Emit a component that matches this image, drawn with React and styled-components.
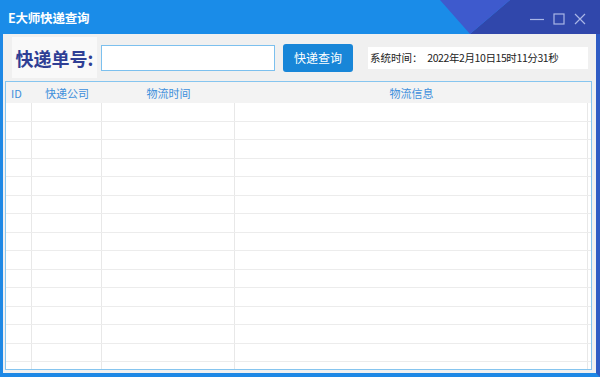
import React from "react";
import styled, { createGlobalStyle } from "styled-components";

const GlobalStyle = createGlobalStyle`
  body {
    margin: 0;
    font-family: "Noto Sans CJK SC", "Noto Sans", sans-serif;
  }
`;

const StyledWindow = styled.div`
  width: 600px;
  height: 377px;
  display: flex;
  flex-direction: column;
  overflow: hidden;
  background: #1e88e5;
`;

const StyledTitleBar = styled.div`
  position: relative;
  height: 34px;
  flex-shrink: 0;
  display: flex;
  align-items: center;
  padding-left: 8px;
  background: #1a8ce8;
`;

const StyledDecoration = styled.svg`
  position: absolute;
  top: 0;
  left: 0;
`;

const StyledTitle = styled.span`
  position: relative;
  color: #fff;
  font-size: 12.5px;
  font-weight: bold;
  letter-spacing: -0.2px;
`;

const StyledControls = styled.div`
  position: relative;
  margin-left: auto;
  display: flex;
  align-items: center;
  gap: 9px;
  padding-right: 14px;
  margin-top: 4px;
`;

const StyledBody = styled.div`
  flex: 1;
  min-height: 0;
  display: flex;
  flex-direction: column;
  background: #f0f0f0;
  border-left: 3px solid #1e88e5;
  border-right: 4px solid #2f5cc4;
  border-bottom: 4px solid #1e88e5;
`;

const StyledToolbar = styled.div`
  height: 47px;
  flex-shrink: 0;
  display: flex;
  align-items: center;
  padding-left: 9px;
`;

const StyledLabel = styled.div`
  width: 85px;
  height: 41px;
  display: flex;
  align-items: center;
  justify-content: center;
  background: #f9f9f9;
  color: #2f3f95;
  font-size: 18px;
  font-weight: bold;
`;

const StyledInput = styled.input`
  box-sizing: border-box;
  margin-left: 4px;
  width: 174px;
  height: 26px;
  border: 1px solid #7cc0ee;
  outline: none;
  background: #fff;
`;

const StyledButton = styled.button`
  margin-left: 8px;
  width: 70px;
  height: 28px;
  border: none;
  border-radius: 3px;
  background: #1886d8;
  color: #fff;
  font-family: inherit;
  font-size: 12px;
`;

const StyledClock = styled.div`
  margin-left: 15px;
  width: 220px;
  height: 22px;
  display: flex;
  align-items: center;
  padding-left: 2px;
  box-sizing: border-box;
  background: #fff;
  color: #222;
  font-size: 10.5px;
  white-space: pre;
`;

const StyledClockValue = styled.span`
  letter-spacing: -0.4px;
`;

const StyledTable = styled.div`
  flex: 1;
  min-height: 0;
  margin: 0 4px 3px 2px;
  border: 1px solid #86c5ef;
  background: #fff;
  overflow: hidden;
`;

const StyledRow = styled.div`
  display: grid;
  grid-template-columns: 26px 70px 133px 353px 1fr;
  height: ${(p) => (p.$header ? "21px" : "18.5px")};
  background: ${(p) => (p.$header ? "#f3f3f3" : "#fff")};
  box-sizing: border-box;
  border-bottom: ${(p) => (p.$header ? "none" : "1px solid #ececec")};
`;

const StyledCell = styled.div`
  display: flex;
  align-items: center;
  justify-content: ${(p) => (p.$left ? "flex-start" : "center")};
  padding-left: ${(p) => (p.$left ? "5px" : "0")};
  color: #3d8fdc;
  font-size: 11px;
  border-right: ${(p) => (p.$line ? "1px solid #e8e8e8" : "none")};
`;

const columns = [
  { title: "ID", left: true },
  { title: "快递公司" },
  { title: "物流时间" },
  { title: "物流信息" },
  { title: "" },
];

function WindowControls() {
  return (
    <StyledControls>
      <svg width="14" height="12" viewBox="0 0 14 12">
        <line x1="0" y1="6.5" x2="14" y2="6.5" stroke="#a9b6e6" strokeWidth="1.2" />
      </svg>
      <svg width="12" height="12" viewBox="0 0 12 12">
        <rect x="1" y="1" width="10" height="10" fill="none" stroke="#a9b6e6" strokeWidth="1.2" />
      </svg>
      <svg width="12" height="12" viewBox="0 0 12 12">
        <path d="M1 1 L11 11 M11 1 L1 11" stroke="#a9b6e6" strokeWidth="1.2" />
      </svg>
    </StyledControls>
  );
}

function App() {
  const rows = Array.from({ length: 15 }, (_, i) => i);

  return (
    <StyledWindow>
      <GlobalStyle />
      <StyledTitleBar>
        <StyledDecoration width="600" height="34" viewBox="0 0 600 34">
          <polygon points="510,0 600,0 600,34 470,34" fill="#3047ab" />
          <polygon points="440,0 510,0 470,34" fill="#3e5acd" />
        </StyledDecoration>
        <StyledTitle>E大师快递查询</StyledTitle>
        <WindowControls />
      </StyledTitleBar>
      <StyledBody>
        <StyledToolbar>
          <StyledLabel>快递单号:</StyledLabel>
          <StyledInput type="text" />
          <StyledButton>快递查询</StyledButton>
          <StyledClock>
            {"系统时间：  "}
            <StyledClockValue>2022年2月10日15时11分31秒</StyledClockValue>
          </StyledClock>
        </StyledToolbar>
        <StyledTable>
          <StyledRow $header>
            {columns.map((c, i) => (
              <StyledCell key={i} $left={c.left}>
                {c.title}
              </StyledCell>
            ))}
          </StyledRow>
          {rows.map((r) => (
            <StyledRow key={r}>
              {columns.map((c, i) => (
                <StyledCell key={i} $line={i < 4} />
              ))}
            </StyledRow>
          ))}
        </StyledTable>
      </StyledBody>
    </StyledWindow>
  );
}

export default App;
